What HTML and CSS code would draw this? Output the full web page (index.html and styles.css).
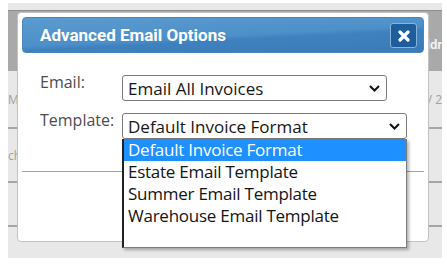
FILE: index.html
```html
<!DOCTYPE html>
<html>
<head>
<meta charset="utf-8">
<link rel="stylesheet" href="styles.css">
</head>
<body>
<div class="page">
  <div class="table">
    <div class="thead">
      <span class="cell-l"></span>
      <span class="cell-r head-text">Addr</span>
    </div>
    <div class="row row1">
      <span class="cell-l">Mi</span>
      <span class="cell-r">INV 2</span>
    </div>
    <div class="row row2">
      <span class="cell-l">ch</span>
      <span class="cell-r"></span>
    </div>
    <div class="row row3">
      <span class="cell-l"></span>
      <span class="cell-r"></span>
    </div>
    <div class="row row4"></div>
  </div>

  <div class="dialog">
    <div class="titlebar">
      <span class="title">Advanced Email Options</span>
      <button class="close" aria-label="Close">
        <svg width="12" height="12" viewBox="0 0 12 12"><path d="M2 2 L10 10 M10 2 L2 10" stroke="#fff" stroke-width="3.2" stroke-linecap="round" fill="none"/></svg>
      </button>
    </div>
    <div class="form">
      <div class="field">
        <span class="label">Email:</span>
        <div class="select select-email">
          <span class="value">Email All Invoices</span>
          <svg class="chev" width="11" height="7" viewBox="0 0 11 7"><path d="M1 1 L5.5 5.5 L10 1" stroke="#111" stroke-width="2" fill="none"/></svg>
        </div>
      </div>
      <div class="field">
        <span class="label">Template:</span>
        <div class="select-wrap">
          <div class="select select-template">
            <span class="value">Default Invoice Format</span>
            <svg class="chev" width="11" height="7" viewBox="0 0 11 7"><path d="M1 1 L5.5 5.5 L10 1" stroke="#111" stroke-width="2" fill="none"/></svg>
          </div>
          <ul class="listbox">
            <li class="option selected">Default Invoice Format</li>
            <li class="option">Estate Email Template</li>
            <li class="option">Summer Email Template</li>
            <li class="option">Warehouse Email Template</li>
          </ul>
        </div>
      </div>
      <div class="separator"></div>
    </div>
  </div>
</div>
</body>
</html>
```

FILE: styles.css
```css
html, body {
  margin: 0;
  padding: 0;
  background: #ffffff;
}
body {
  width: 447px;
  height: 264px;
  overflow: hidden;
}
.page {
  position: relative;
  margin: 3px 0 0 8px;
  width: 434px;
  height: 255px;
  background: #e8e8e8;
  overflow: hidden;
  font-family: "Open Sans", "Noto Sans", sans-serif;
}
.table {
  margin-top: 7px;
}
.thead, .row {
  display: flex;
  align-items: center;
  justify-content: space-between;
  font-size: 12px;
  color: #a0a0a0;
  white-space: nowrap;
}
.thead {
  height: 60px;
  border-top: 1px solid #8e8e8e;
  background: #a9a9a9;
}
.head-text {
  color: #f2f2f2;
  font-weight: bold;
  font-size: 13px;
  font-family: Roboto, "Liberation Sans", sans-serif;
  margin-top: 6px;
}
.row {
  border-bottom: 2px solid #a6a6a6;
}
.row1 { height: 56px; }
.row2 { height: 52px; }
.row3 { height: 42px; }
.row4 { height: 20px; border-bottom: none; }
.cell-l {
  margin-left: 0;
}
.cell-r {
  text-align: right;
}

.dialog {
  position: absolute;
  left: 9px;
  top: 9px;
  width: 412px;
  height: 230px;
  box-sizing: border-box;
  border: 1px solid #c2c2c2;
  border-radius: 4px;
  padding: 4px;
  background: #ffffff;
}
.titlebar {
  height: 36px;
  box-sizing: border-box;
  border: 1px solid #4a86bd;
  border-radius: 4px;
  background: linear-gradient(177deg, #5a9bd0 0%, #4d8fc8 52%, #3f81bf 60%, #3a7ab7 100%);
  display: flex;
  align-items: center;
  justify-content: space-between;
  padding: 0 6px 0 17px;
}
.title {
  font-family: Roboto, "Liberation Sans", sans-serif;
  font-weight: bold;
  font-size: 17px;
  color: #ffffff;
}
.close {
  width: 27px;
  height: 25px;
  margin-top: 1px;
  box-sizing: border-box;
  border: 1px solid #86b4dc;
  border-radius: 3px;
  background: #1d5d9b;
  padding: 0;
  display: flex;
  align-items: center;
  justify-content: center;
}
.form {
  padding: 19px 0 0 18px;
}
.field {
  display: flex;
  align-items: flex-start;
}
.field + .field {
  margin-top: 9px;
}
.label {
  width: 82px;
  font-size: 16px;
  line-height: 20px;
  color: #4d4d4d;
}
.select {
  margin-top: 3px;
  height: 26px;
  box-sizing: border-box;
  border: 1px solid #7a7a7a;
  border-radius: 3px;
  background: #fff;
  display: flex;
  align-items: center;
  justify-content: space-between;
  padding: 0 6px 0 5px;
  font-size: 17px;
  color: #161616;
}
.select-email {
  width: 265px;
}
.select-wrap {
  position: relative;
}
.select-template {
  width: 285px;
}
.listbox {
  position: absolute;
  left: 0;
  top: 29px;
  width: 285px;
  height: 109px;
  margin: 0;
  padding: 0;
  list-style: none;
  box-sizing: border-box;
  background: #ffffff;
  border: 1px solid #7c7c7c;
  border-left: 2px solid #222222;
  border-top: none;
  box-shadow: 2px 2px 3px rgba(0, 0, 0, 0.3);
  z-index: 2;
}
.option {
  height: 22px;
  line-height: 22px;
  padding-left: 4px;
  font-size: 17px;
  letter-spacing: -0.25px;
  color: #141414;
  white-space: nowrap;
}
.option.selected {
  background: #1e90ff;
  color: #ffffff;
}
.separator {
  margin: 32px 0 0 -18px;
  height: 1px;
  background: #a3a3a3;
}
```
